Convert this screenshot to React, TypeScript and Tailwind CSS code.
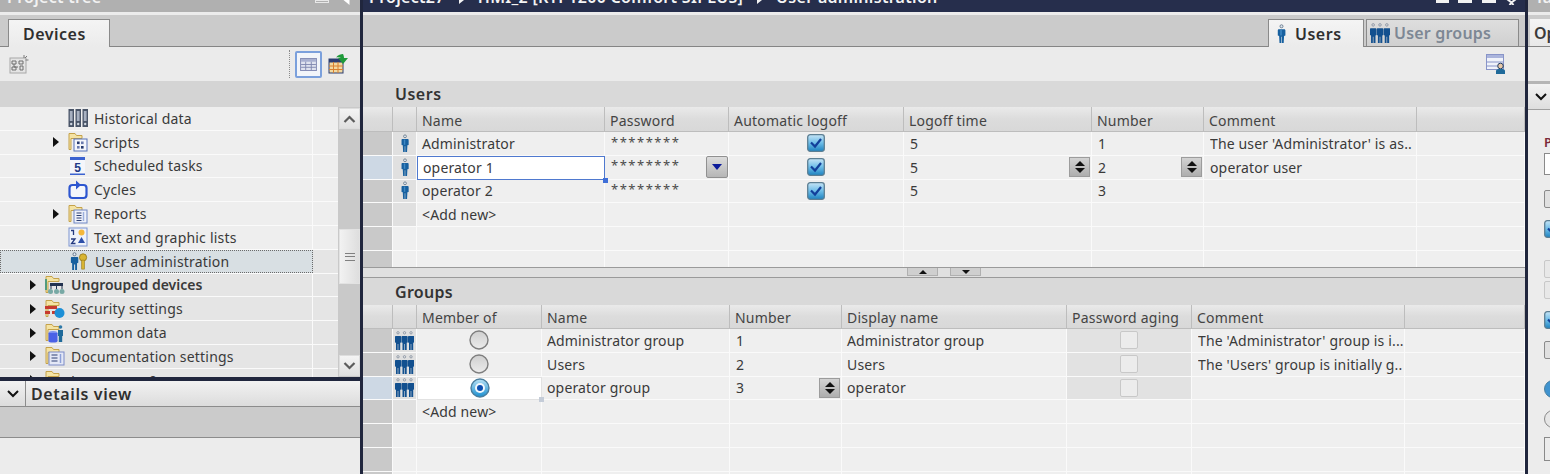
import React from "react";

const Person = ({ className = "w-[8px] h-[21px]" }: { className?: string }) => (
  <svg viewBox="0 0 9 21" className={className}>
    <circle cx="4.5" cy="2.4" r="1.6" fill="#dfe8f0" stroke="#44586e" strokeWidth="0.7" />
    <path d="M1.6 5.4h5.8c.8 0 1.200.6 1.200 1.400v5.400l-1.400.4 -.4 7.400H4.800v-6.500h-.6V20H2.400L2 12.600l-1.400-.4V6.800c0-.8.300-1.400 1-1.400z" fill="#17609f" />
    <rect x="3.200" y="6" width="1.600" height="6" fill="#3f88c4" />
  </svg>
);

const Group = ({ className = "w-[19px] h-[19px]" }: { className?: string }) => (
  <svg viewBox="0 0 19 19" className={className}>
    {[0, 6.5, 13].map((x) => (
      <g key={x} transform={`translate(${x} 0)`}>
        <circle cx="3" cy="1.800" r="1.200" fill="#e2e2e2" stroke="#66758a" strokeWidth="0.6" />
        <path d="M.6 5h4.800c.5 0 .8.400.8.900v5.500l-1 .4V19H3.300v-6h-.6v6H1v-7.200l-1-.4V5.900c0-.5.200-.9.600-.9z" fill="#12508f" />
      </g>
    ))}
  </svg>
);

const FolderBase = ({ children }: { children?: React.ReactNode }) => (
  <svg viewBox="0 0 20 20" className="w-[20px] h-[20px]">
    <path d="M1 1.500h6l1.500 2H14v3H3v11H1z" fill="#f4e3a4" stroke="#c5a24a" strokeWidth="1" />
    {children}
  </svg>
);

const Historical = () => (
  <svg viewBox="0 0 20 20" className="w-[20px] h-[20px]">
    {[0, 7, 14].map((x) => (
      <g key={x}>
        <rect x={x + 0.5} y="1" width="5.500" height="18" fill="#4a5568" />
        <rect x={x + 1.800} y="3" width="2.800" height="10" fill="#a7b0c0" />
        <circle cx={x + 3.200} cy="16" r="1.200" fill="#cfd6e0" />
      </g>
    ))}
  </svg>
);

const Scripts = () => (
  <FolderBase>
    <rect x="6" y="7" width="13" height="12" fill="#f4f6fb" stroke="#5772b8" />
    <rect x="9" y="9.500" width="2.600" height="2.600" fill="#263a6e" />
    <rect x="13" y="9.500" width="2.600" height="2.600" fill="#6a7bae" />
    <rect x="9" y="14" width="2.600" height="2.600" fill="#6a7bae" />
    <rect x="13" y="14" width="2.600" height="2.600" fill="#263a6e" />
  </FolderBase>
);

const Scheduled = () => (
  <svg viewBox="0 0 20 20" className="w-[20px] h-[20px]">
    <rect x="2" y="1" width="15" height="18" fill="#f4f6fb" />
    <rect x="2" y="1" width="15" height="3" fill="#3b62d0" />
    <rect x="2" y="17.500" width="15" height="1.500" fill="#3b62d0" />
    <text x="9.500" y="15.500" textAnchor="middle" fontSize="12" fontWeight="700" fill="#223a88" fontFamily="'Liberation Sans',sans-serif">5</text>
  </svg>
);

const Cycles = () => (
  <svg viewBox="0 0 20 20" className="w-[20px] h-[20px]">
    <rect x="1.500" y="5" width="17" height="13" rx="3" fill="#f4f6fb" stroke="#2d56d0" strokeWidth="2.200" />
    <path d="M8 .5l5 4.500-5 4.500z" fill="#2d56d0" />
  </svg>
);

const Reports = () => (
  <FolderBase>
    <rect x="6" y="6" width="13" height="13" fill="#eef1fa" stroke="#6e86c4" />
    <path d="M8.500 9h5M8.500 11.500h5M8.500 14h5M8.500 16.500h5" stroke="#2c3e72" strokeWidth="1" />
    <path d="M15.500 8v9" stroke="#9cb0dc" strokeWidth="1.500" />
  </FolderBase>
);

const TextLists = () => (
  <svg viewBox="0 0 20 20" className="w-[20px] h-[20px]">
    <rect x="1" y="1" width="18" height="18" fill="#eef2fb" stroke="#7d94d0" />
    <circle cx="13.500" cy="5.500" r="3" fill="#f5b73a" />
    <path d="M10 16l3.500-6 3.500 6z" fill="#2d4fa8" />
    <path d="M3 3.500h2.500V8M3 12h4l-3.500 4.500h4" fill="none" stroke="#243a80" strokeWidth="1.300" />
  </svg>
);

const UserAdmin = () => (
  <svg viewBox="0 0 20 20" className="w-[18px] h-[20px]">
    <circle cx="5" cy="2.500" r="1.700" fill="#e6eef6" stroke="#44586e" strokeWidth="0.8" />
    <path d="M2 5.500h6c.8 0 1.200.6 1.200 1.400V12l-1.400.4V20H5.700v-6H4.500v6H2.400v-7.600L1 12V6.900c0-.8.300-1.400 1-1.400z" fill="#17609f" />
    <circle cx="14.500" cy="6" r="4" fill="#d8b533" stroke="#9a7d1c" />
    <rect x="13" y="9" width="3" height="10" fill="#d8b533" stroke="#9a7d1c" strokeWidth="0.7" />
  </svg>
);

const Ungrouped = () => (
  <FolderBase>
    <rect x="5" y="8" width="13" height="3" fill="#23324f" />
    <path d="M6 11v3M11.500 11v3M17 11v3" stroke="#23324f" />
    <circle cx="5.500" cy="16.500" r="2.500" fill="#78a9a5" />
    <circle cx="11.500" cy="16.500" r="2.500" fill="#78a9a5" />
    <circle cx="17" cy="16.500" r="2.500" fill="#78a9a5" />
    <path d="M1 4v11" stroke="#258f7a" strokeWidth="1.500" />
  </FolderBase>
);

const Security = () => (
  <FolderBase>
    <rect x="0" y="7" width="12" height="3" fill="#c63a2f" />
    <rect x="0" y="12" width="5" height="3" fill="#c63a2f" />
    <rect x="7" y="12" width="5" height="3" fill="#c63a2f" />
    <circle cx="14.500" cy="14" r="5" fill="#1c8fd6" />
  </FolderBase>
);

const Common = () => (
  <FolderBase>
    <ellipse cx="8" cy="10" rx="4.500" ry="2" fill="#7a8ff0" />
    <rect x="3.500" y="10" width="9" height="8" fill="#4a61e6" />
    <ellipse cx="8" cy="18" rx="4.500" ry="1.600" fill="#4a61e6" />
    <circle cx="15.500" cy="4" r="1.800" fill="#2f79a8" />
    <path d="M13 7h5v6h-.8v6h-3.400v-6H13z" fill="#1f6a9a" />
  </FolderBase>
);

const Documentation = () => (
  <FolderBase>
    <rect x="4" y="6" width="15" height="13" fill="#e4e8f6" stroke="#7d8cc8" />
    <path d="M6.500 9h6M6.500 12h6M6.500 15h6" stroke="#2c3e72" />
    <path d="M15.500 8v9" stroke="#8da0d8" strokeWidth="1.500" />
  </FolderBase>
);

const Languages = () => (
  <FolderBase>
    <circle cx="12" cy="13" r="6" fill="#1c7fc6" />
  </FolderBase>
);

const Arrow = () => (
  <svg viewBox="0 0 6 10" className="w-[6px] h-[10px]">
    <path d="M0 0l6 5-6 5z" fill="#111" />
  </svg>
);

const Chevron = ({ up = false }: { up?: boolean }) => (
  <svg viewBox="0 0 12 8" className="w-[13px] h-[8px]">
    <path d={up ? "M1 7l5-5 5 5" : "M1 1l5 5 5-5"} fill="none" stroke="#5c5c5c" strokeWidth="2.200" />
  </svg>
);

const Check = () => (
  <svg viewBox="0 0 18 18" className="w-[18px] h-[18px]">
    <defs>
      <linearGradient id="cb" x1="0" y1="0" x2="0" y2="1">
        <stop offset="0" stopColor="#c6e4f6" />
        <stop offset="0.5" stopColor="#6dbde8" />
        <stop offset="1" stopColor="#1d82c0" />
      </linearGradient>
    </defs>
    <rect x="0.700" y="0.700" width="16.600" height="16.600" rx="2.500" fill="url(#cb)" stroke="#5d7f93" strokeWidth="1.300" />
    <path d="M4 8.500l4 4 6-7.500" fill="none" stroke="#123f9a" strokeWidth="2.200" />
  </svg>
);

const Radio = ({ on = false }: { on?: boolean }) => (
  <svg viewBox="0 0 20 20" className="w-[20px] h-[20px]">
    <defs>
      <linearGradient id="ron" x1="0" y1="0" x2="0" y2="1">
        <stop offset="0" stopColor="#b8e2f6" />
        <stop offset="1" stopColor="#1a8fd0" />
      </linearGradient>
      <linearGradient id="roff" x1="0" y1="0" x2="0" y2="1">
        <stop offset="0" stopColor="#cfcfcf" />
        <stop offset="1" stopColor="#ececec" />
      </linearGradient>
    </defs>
    <circle cx="10" cy="10" r="9" fill={on ? "url(#ron)" : "url(#roff)"} stroke={on ? "#4a7f9f" : "#7e7e7e"} strokeWidth="1.400" />
    {on && <circle cx="10" cy="10" r="5" fill="#f2f8fc" />}
    {on && <circle cx="10" cy="10" r="3" fill="#0c4fb0" />}
  </svg>
);

const SpinnerBtn = () => (
  <span className="w-[21px] h-[20px] bg-gradient-to-b from-[#d2d2d2] to-[#aeaeae] border border-[#9c9c9c] flex flex-col items-center justify-center gap-[2px]">
    <svg viewBox="0 0 10 5" className="w-[10px] h-[5px]"><path d="M0 5l5-5 5 5z" fill="#111" /></svg>
    <svg viewBox="0 0 10 5" className="w-[10px] h-[5px]"><path d="M0 0l5 5 5-5z" fill="#111" /></svg>
  </span>
);

const DropBtn = () => (
  <span className="w-[22px] h-[22px] bg-gradient-to-b from-[#dcdcdc] to-[#b6b6b6] border border-[#909090] rounded-[2px] flex items-center justify-center">
    <svg viewBox="0 0 10 6" className="w-[10px] h-[6px]"><path d="M0 0h10L5 6z" fill="#0c1b9a" /></svg>
  </span>
);

const tree: { icon: React.ReactNode; label: string; arrow?: boolean; depth: number; bold?: boolean; sel?: boolean }[] = [
  { icon: <Historical />, label: "Historical data", depth: 2 },
  { icon: <Scripts />, label: "Scripts", arrow: true, depth: 2 },
  { icon: <Scheduled />, label: "Scheduled tasks", depth: 2 },
  { icon: <Cycles />, label: "Cycles", depth: 2 },
  { icon: <Reports />, label: "Reports", arrow: true, depth: 2 },
  { icon: <TextLists />, label: "Text and graphic lists", depth: 2 },
  { icon: <UserAdmin />, label: "User administration", depth: 2, sel: true },
  { icon: <Ungrouped />, label: "Ungrouped devices", arrow: true, depth: 1, bold: true },
  { icon: <Security />, label: "Security settings", arrow: true, depth: 1 },
  { icon: <Common />, label: "Common data", arrow: true, depth: 1 },
  { icon: <Documentation />, label: "Documentation settings", arrow: true, depth: 1 },
  { icon: <Languages />, label: "Languages & resources", arrow: true, depth: 1 },
];

const TreeRow = ({ r }: { r: (typeof tree)[number] }) => (
  <div className={`h-[23.8px] shrink-0 flex border-b border-[#fafafa] ${r.depth === 2 && !r.sel ? "bg-[#eeeeee]" : "bg-[#e5e5e5]"}`}>
    <div
      className={`w-[313px] shrink-0 flex items-center ${r.depth === 2 ? "pl-[53px]" : "pl-[30px]"} ${
        r.sel ? "bg-[#d8dfe3] border border-dotted border-[#6a6a6a]" : "border-r border-[#fafafa]"
      }`}
    >
      <span className="w-[15px] shrink-0 flex items-center">{r.arrow && <Arrow />}</span>
      <span className="w-[20px] h-[20px] shrink-0 flex items-center justify-center">{r.icon}</span>
      <span className={`ml-[6px] text-[14px] tracking-[0.2px] whitespace-nowrap text-[#3a3a3a] ${r.bold ? "font-semibold tracking-normal" : ""}`}>{r.label}</span>
    </div>
    <div className="flex-1" />
  </div>
);

const Tab = ({ children, active }: { children: React.ReactNode; active?: boolean }) => (
  <div
    className={`flex items-center border border-b-0 border-[#8a8a8a] text-[16px] font-semibold ${
      active
        ? "h-[28px] -mb-px bg-gradient-to-b from-[#f4f4f4] to-[#ebebeb] text-[#2f2f2f] tracking-[0.5px]"
        : "h-[27px] bg-gradient-to-b from-[#dedede] to-[#d0d0d0] text-[#7d8794] tracking-[0.2px]"
    }`}
  >
    {children}
  </div>
);

const Head = ({ children }: { children?: React.ReactNode }) => (
  <div className="bg-gradient-to-b from-[#eaeaea] via-[#dcdcdc] to-[#d8d8d8] border-r border-b border-[#bdbdbd] flex items-center pl-[5px] pt-[2px] text-[14px] tracking-[0.2px] text-[#444444] whitespace-nowrap overflow-hidden">
    {children}
  </div>
);

const Cell = ({ children, className = "" }: { children?: React.ReactNode; className?: string }) => (
  <div className={`border-r border-b border-[#fafafa] flex items-center text-[14px] tracking-[0.15px] text-[#3a3a3a] whitespace-nowrap overflow-hidden min-w-0 ${className}`}>
    {children}
  </div>
);

const Sel = ({ active }: { active?: boolean }) => <Cell className={active ? "bg-[#cdd8e4]" : "bg-[#c9c9c9]"} />;
const IconCell = ({ children, on = true }: { children?: React.ReactNode; on?: boolean }) => (
  <Cell className={`justify-center ${on ? "bg-[#e0e0e0]" : "bg-[#efefef]"}`}>{children}</Cell>
);
const Txt = ({ children, className = "" }: { children?: React.ReactNode; className?: string }) => (
  <Cell className={`bg-[#efefef] pl-[5px] ${className}`}>{children}</Cell>
);
const Stars = ({ btn }: { btn?: boolean }) => (
  <Cell className="bg-[#efefef] pl-[6px] justify-between items-center">
    <span className="text-[13px] tracking-[1.500px] text-[#4a4a4a] -translate-y-[1px]">********</span>
    {btn && <DropBtn />}
  </Cell>
);
const Spin = ({ v }: { v: string }) => (
  <Cell className="bg-[#efefef] pl-[6px] pr-[1px] justify-between">
    <span>{v}</span>
    <SpinnerBtn />
  </Cell>
);
const CheckCell = () => (
  <Cell className="bg-[#efefef] justify-center">
    <Check />
  </Cell>
);
const DisabledCheck = () => (
  <Cell className="bg-[#e2e2e2] justify-center">
    <span className="w-[18px] h-[18px] rounded-[2px] border border-[#c8c8c8] bg-[#ececec]" />
  </Cell>
);

const UsersTable = () => {
  const blank = () => (
    <>
      <Sel />
      <IconCell on={false} />
      {Array.from({ length: 7 }).map((_, i) => (
        <Txt key={i} />
      ))}
    </>
  );
  return (
    <div className="h-[160px] shrink-0 overflow-hidden grid grid-cols-[30px_24px_188px_124px_175px_188px_112px_213px_1fr] grid-rows-[25px] auto-rows-[23.8px]">
      <Head />
      <Head />
      <Head>Name</Head>
      <Head>Password</Head>
      <Head>Automatic logoff</Head>
      <Head>Logoff time</Head>
      <Head>Number</Head>
      <Head>Comment</Head>
      <Head />

      <Sel />
      <IconCell><Person /></IconCell>
      <Txt>Administrator</Txt>
      <Stars />
      <CheckCell />
      <Txt className="!pl-[6px]">5</Txt>
      <Txt className="!pl-[6px]">1</Txt>
      <Txt className="!pl-[6px] pr-[2px]"><span className="truncate">The user 'Administrator' is as..</span></Txt>
      <Txt />

      <Sel active />
      <IconCell><Person /></IconCell>
      <div className="relative bg-white border-[1.500px] border-[#4f79cf] flex items-center pl-[5px] text-[14px] tracking-[0.15px] text-[#3a3a3a]">
        operator 1
        <span className="absolute right-[-4px] bottom-[-4px] w-[5px] h-[5px] bg-[#3f6fd8]" />
      </div>
      <Stars btn />
      <CheckCell />
      <Spin v="5" />
      <Spin v="2" />
      <Txt className="!pl-[6px]">operator user</Txt>
      <Txt />

      <Sel />
      <IconCell><Person /></IconCell>
      <Txt>operator 2</Txt>
      <Stars />
      <CheckCell />
      <Txt className="!pl-[6px]">5</Txt>
      <Txt className="!pl-[6px]">3</Txt>
      <Txt />
      <Txt />

      <Sel />
      <IconCell on />
      <Txt>&lt;Add new&gt;</Txt>
      {Array.from({ length: 6 }).map((_, i) => (
        <Txt key={i} />
      ))}

      {blank()}
      {blank()}
    </div>
  );
};

const GroupsTable = () => {
  const blank = (k: number) => (
    <React.Fragment key={k}>
      <Sel />
      <IconCell on={false} />
      {Array.from({ length: 7 }).map((_, i) => (
        <Txt key={i} />
      ))}
    </React.Fragment>
  );
  return (
    <div className="flex-1 overflow-hidden grid grid-cols-[30px_24px_125px_188px_112px_225px_125px_213px_1fr] grid-rows-[24px] auto-rows-[23.8px]">
      <Head />
      <Head />
      <Head>Member of</Head>
      <Head>Name</Head>
      <Head>Number</Head>
      <Head>Display name</Head>
      <Head>Password aging</Head>
      <Head>Comment</Head>
      <Head />

      <Sel />
      <IconCell><Group /></IconCell>
      <Cell className="bg-[#efefef] justify-center"><Radio /></Cell>
      <Txt>Administrator group</Txt>
      <Txt className="!pl-[6px]">1</Txt>
      <Txt>Administrator group</Txt>
      <DisabledCheck />
      <Txt className="!pl-[6px]"><span className="truncate">The 'Administrator' group is i...</span></Txt>
      <Txt />

      <Sel />
      <IconCell><Group /></IconCell>
      <Cell className="bg-[#efefef] justify-center"><Radio /></Cell>
      <Txt>Users</Txt>
      <Txt className="!pl-[6px]">2</Txt>
      <Txt>Users</Txt>
      <DisabledCheck />
      <Txt className="!pl-[6px]"><span className="truncate">The 'Users' group is initially g..</span></Txt>
      <Txt />

      <Sel active />
      <IconCell><Group /></IconCell>
      <div className="relative bg-white border border-[#e2e2e2] flex items-center justify-center">
        <Radio on />
        <span className="absolute right-[-3px] bottom-[-3px] w-[5px] h-[5px] bg-[#c4ccd8]" />
      </div>
      <Txt>operator group</Txt>
      <Spin v="3" />
      <Txt>operator</Txt>
      <DisabledCheck />
      <Txt />
      <Txt />

      <Sel />
      <IconCell on />
      <Txt>&lt;Add new&gt;</Txt>
      {Array.from({ length: 6 }).map((_, i) => (
        <Txt key={i} />
      ))}

      {[0, 1, 2, 3].map(blank)}
    </div>
  );
};

const Crumb = () => (
  <svg viewBox="0 0 5 8" className="w-[5px] h-[8px] self-center"><path d="M0 0l5 4-5 4z" fill="#f4f4f4" /></svg>
);

export default function App() {
  return (
    <div className="w-[1550px] h-[474px] overflow-hidden flex bg-[#20263d] [font-family:'Noto_Sans',sans-serif]">
      {/* Project tree */}
      <div className="w-[360px] shrink-0 flex flex-col">
        <div className="h-[12px] shrink-0 bg-[#b0b0b0] overflow-hidden flex justify-between pl-[7px] pr-[10px]">
          <span className="text-[16px] tracking-[0.3px] font-semibold leading-[20px] -mt-[13px] text-[#f2f2f2] whitespace-nowrap">Project tree</span>
          <span className="flex gap-[14px] items-start">
            <span className="w-[14px] h-[3px] border border-[#e8e8e8] mt-0" />
            <svg viewBox="0 0 6 5" className="w-[7px] h-[5px]"><path d="M6 0H0l6 5z" fill="#fff" /></svg>
          </span>
        </div>
        <div className="h-[3px] shrink-0 bg-[#ececec]" />
        <div className="h-[32px] shrink-0 bg-[#cbcbcb] border-b border-[#858585] flex items-end pl-[8px]">
          <Tab active>
            <span className="w-[100px] pl-[14px]">Devices</span>
          </Tab>
        </div>
        <div className="h-[34px] shrink-0 bg-[#ebebeb] flex items-center pl-[9px] pr-[12px]">
          <svg viewBox="0 0 20 20" className="w-[20px] h-[20px]">
            <rect x="1" y="4" width="16" height="15" fill="#e4e4e4" stroke="#a8a8a8" />
            <path d="M3 7h4v3H3zM10 7h4v3h-4zM5 10v3h4M3 13h4v3H3zM11 12h3v4h-3z" fill="none" stroke="#6e6e6e" />
            <path d="M15 1v3M18 2l-2 2M19.500 6h-3" stroke="#7a7a7a" />
          </svg>
          <span className="flex-1" />
          <span className="h-[28px] border-l border-dotted border-[#8a8a8a] mr-[5px]" />
          <span className="w-[27px] h-[27px] rounded-[2px] border-2 border-[#7ba0dc] bg-[#f2f5fa] flex items-center justify-center mr-[6px]">
            <svg viewBox="0 0 18 14" className="w-[17px] h-[13px]">
              <rect x="0.500" y="0.500" width="17" height="13" fill="#dfe3ef" stroke="#7e86b0" />
              <rect x="1" y="1" width="16" height="3" fill="#a8b0d0" />
              <path d="M1 7h16M1 10h16M6 4v9M12 4v9" stroke="#8088b0" />
            </svg>
          </span>
          <svg viewBox="0 0 20 20" className="w-[20px] h-[20px]">
            <rect x="1" y="5" width="14" height="14" fill="#f2d9a0" stroke="#2c3e72" />
            <rect x="1" y="5" width="14" height="3.500" fill="#2c3e72" />
            <path d="M1 12h14M1 15.500h14M5.500 8v11M10 8v11" stroke="#d88030" />
            <path d="M8 3.500C10 .5 13 0 15 0v-0l0 0c.5 1 1 2 1 4h4l-5 6-5-6h3c-1-.6-3-.8-5-.5z" fill="#1f9a3a" />
          </svg>
        </div>
        <div className="h-[26px] shrink-0 bg-[#d4d4d4]" />
        <div className="h-[270px] shrink-0 flex overflow-hidden">
          <div className="flex-1 flex flex-col min-w-0 overflow-hidden">
            {tree.map((r) => (
              <TreeRow key={r.label} r={r} />
            ))}
          </div>
          <div className="w-[22px] shrink-0 bg-[#c9c9c9] flex flex-col pl-[1px]">
            <div className="h-[21px] mt-[1px] w-[21px] bg-gradient-to-b from-[#f4f4f4] to-[#e0e0e0] border border-[#dddddd] flex items-center justify-center">
              <Chevron up />
            </div>
            <div className="h-[100px]" />
            <div className="h-[55px] w-[21px] bg-gradient-to-r from-[#f2f2f2] to-[#dedede] border border-[#e2e2e2] flex items-center justify-center">
              <span className="w-[10px] h-[8px] border-y border-[#808080] flex items-center"><span className="w-full h-px bg-[#808080]" /></span>
            </div>
            <div className="flex-1" />
            <div className="h-[21px] w-[21px] mb-[1px] bg-gradient-to-b from-[#f4f4f4] to-[#e0e0e0] border border-[#dddddd] flex items-center justify-center">
              <Chevron />
            </div>
          </div>
        </div>
        <div className="h-[4px] shrink-0 bg-[#20263d]" />
        <div className="h-[26px] shrink-0 bg-gradient-to-b from-[#f2f2f2] to-[#dcdcdc] border-b border-[#8c8c8c] flex items-center">
          <span className="w-[26px] h-full border-r border-[#8c8c8c] flex items-center justify-center">
            <svg viewBox="0 0 12 8" className="w-[12px] h-[8px]"><path d="M1 1l5 5 5-5" fill="none" stroke="#111" strokeWidth="2" /></svg>
          </span>
          <span className="pl-[5px] text-[16px] tracking-[0.6px] font-semibold text-[#2f2f2f]">Details view</span>
        </div>
        <div className="h-[31px] shrink-0 bg-[#cbcbcb] border-b border-[#8c8c8c]" />
        <div className="flex-1 bg-[#ececec]" />
      </div>

      <div className="w-[3px] shrink-0" />

      {/* Editor */}
      <div className="w-[1162px] shrink-0 flex flex-col">
        <div className="h-[12px] shrink-0 bg-[#262e4c] overflow-hidden flex justify-between pl-[6px] pr-[7px]">
          <span className="text-[16px] tracking-[0.3px] font-semibold leading-[20px] -mt-[13px] text-[#f4f4f4] whitespace-nowrap flex gap-[14px]">
            <span>Project27</span>
            <Crumb />
            <span>HMI_2 [KTP1200 Comfort SIPLUS]</span>
            <Crumb />
            <span>User administration</span>
          </span>
          <span className="flex items-start">
            <span className="w-[13px] h-[3px] bg-[#f2f2f2]" />
            <span className="w-[14px] h-[3px] ml-[9px] bg-[#f2f2f2]" />
            <span className="w-[14px] h-[3px] ml-[10px] bg-[#f2f2f2]" />
            <svg viewBox="0 0 13 5" className="w-[13px] h-[5px] ml-[9px]"><path d="M2 -1l4.500 3.500L11 -1M4.500 5l2-2.500 2 2.500" fill="none" stroke="#f2f2f2" strokeWidth="2" /></svg>
          </span>
        </div>
        <div className="h-[3px] shrink-0 bg-[#ececec]" />
        <div className="h-[32px] shrink-0 bg-[#cbcbcb] border-b border-[#858585] flex items-end justify-end gap-[2px] pr-[6px]">
          <Tab active>
            <span className="w-[94px] flex items-center gap-[9px] pl-[8px]">
              <Person className="w-[9px] h-[20px]" />
              Users
            </span>
          </Tab>
          <Tab>
            <span className="w-[151px] flex items-center gap-[4px] pl-[3px]">
              <Group className="w-[20px] h-[20px]" />
              User groups
            </span>
          </Tab>
        </div>
        <div className="h-[34px] shrink-0 bg-[#ebebeb] flex items-center justify-end pr-[19px]">
          <svg viewBox="0 0 20 20" className="w-[20px] h-[20px]">
            <rect x="0.500" y="0.500" width="17" height="15" fill="#f0f3fa" stroke="#8894c8" />
            <rect x="1" y="1" width="16" height="3" fill="#aab4dc" />
            <path d="M1 8h16M1 12h10" stroke="#8894c8" />
            <circle cx="14.500" cy="12" r="2.800" fill="#e8c8a8" stroke="#203a60" />
            <path d="M10 20v-3c0-1.500 1.500-2 4.500-2s4.500.5 4.500 2v3z" fill="#1f6a9a" />
          </svg>
        </div>
        <div className="h-[26px] shrink-0 bg-[#d9d9d9] flex items-center pl-[32px] text-[16px] tracking-[0.5px] font-semibold text-[#333333]">Users</div>
        <UsersTable />
        <div className="h-[11px] shrink-0 bg-[#e0e0e0] border-y border-[#9a9a9a] flex items-start justify-center gap-[12px]">
          <span className="w-[31px] h-[8px] bg-[#cfcfcf] border-x border-b border-[#b0b0b0] flex items-center justify-center">
            <svg viewBox="0 0 8 4" className="w-[8px] h-[4px]"><path d="M0 4l4-4 4 4z" fill="#111" /></svg>
          </span>
          <span className="w-[31px] h-[8px] bg-[#cfcfcf] border-x border-b border-[#b0b0b0] flex items-center justify-center">
            <svg viewBox="0 0 8 4" className="w-[8px] h-[4px]"><path d="M0 0l4 4 4-4z" fill="#111" /></svg>
          </span>
        </div>
        <div className="h-[27px] shrink-0 bg-[#d9d9d9] flex items-center pl-[32px] text-[16px] tracking-[0.3px] font-semibold text-[#333333]">Groups</div>
        <GroupsTable />
      </div>

      <div className="w-[3px] shrink-0" />

      {/* Right task panel, cut off at the window edge */}
      <div className="flex-1 min-w-0 flex flex-col overflow-hidden">
        <div className="h-[12px] shrink-0 bg-[#b0b0b0] overflow-hidden pl-[7px]">
          <span className="block text-[16px] font-semibold leading-[20px] -mt-[13px] text-[#f2f2f2] whitespace-nowrap">Tasks</span>
        </div>
        <div className="h-[3px] shrink-0 bg-[#ececec]" />
        <div className="h-[32px] shrink-0 bg-[#cbcbcb] border-b border-[#858585] flex items-end pl-[2px]">
          <span className="h-[27px] w-full pl-[4px] flex items-center text-[16px] font-semibold text-[#3a3a3a] bg-gradient-to-b from-[#f4f4f4] to-[#e8e8e8] whitespace-nowrap">Options</span>
        </div>
        <div className="h-[34px] shrink-0 bg-[#ebebeb]" />
        <div className="h-[3px] shrink-0 bg-[#b5b5b5]" />
        <div className="h-[26px] shrink-0 bg-gradient-to-b from-[#f2f2f2] to-[#dedede] border-b border-[#a0a0a0] flex items-center pl-[7px]">
          <svg viewBox="0 0 12 8" className="w-[12px] h-[8px]"><path d="M1 1l5 5 5-5" fill="none" stroke="#111" strokeWidth="2" /></svg>
        </div>
        <div className="flex-1 bg-[#ececec] pl-[16px] flex flex-col">
          <span className="mt-[25px] h-[14px] text-[13px] leading-[14px] font-semibold text-[#7a2a3a] whitespace-nowrap">Password</span>
          <span className="mt-[4px] h-[22px] w-[30px] shrink-0 bg-white border border-[#8a8a8a]" />
          <span className="mt-[15px] h-[18px] w-[18px] shrink-0 rounded-[2px] border border-[#8a8a8a] bg-[#e0e0e0]" />
          <span className="mt-[12px] h-[18px] w-[18px] shrink-0"><Check /></span>
          <span className="mt-[22px] h-[18px] w-[18px] shrink-0 rounded-[2px] border border-[#c8c8c8] bg-[#e8e8e8]" />
          <span className="mt-[3px] h-[18px] w-[18px] shrink-0 rounded-[2px] border border-[#c8c8c8] bg-[#e8e8e8]" />
          <span className="mt-[12px] h-[18px] w-[18px] shrink-0"><Check /></span>
          <span className="mt-[12px] h-[18px] w-[18px] shrink-0 rounded-[2px] border border-[#8a8a8a] bg-[#e0e0e0]" />
          <span className="mt-[21px] h-[18px] w-[18px] shrink-0 rounded-full bg-[#3f93cf] border border-[#4a7f9f]" />
          <span className="mt-[12px] h-[18px] w-[18px] shrink-0 rounded-full bg-[#e6e6e6] border border-[#8a8a8a]" />
          <span className="mt-[9px] h-[24px] w-[30px] shrink-0 bg-[#ececec] border border-[#8a8a8a]" />
        </div>
      </div>
    </div>
  );
}
